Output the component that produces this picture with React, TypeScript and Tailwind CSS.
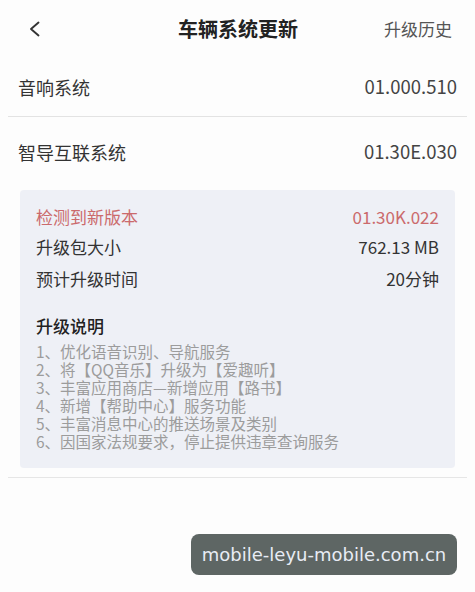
const notes = [
  '1、优化语音识别、导航服务',
  '2、将【QQ音乐】升级为【爱趣听】',
  '3、丰富应用商店—新增应用【路书】',
  '4、新增【帮助中心】服务功能',
  '5、丰富消息中心的推送场景及类别',
  '6、因国家法规要求，停止提供违章查询服务',
];

const font = { fontFamily: '"Noto Sans CJK SC", "Noto Sans", sans-serif' };

export default function App() {
  return (
    <div className="w-[475px] h-[592px] bg-[#fdfdfd] text-[#333] overflow-hidden" style={font}>
      {/* header */}
      <div className="h-[58px] flex items-center pl-[28px] pr-[23px]">
        <div className="w-[120px]">
          <svg width="14" height="16" viewBox="0 0 14 16" fill="none" className="text-[#333]">
            <path d="M10.5 1.5 L3 8 L10.5 14.5" stroke="currentColor" strokeWidth="1.9" strokeLinecap="round" strokeLinejoin="round" />
          </svg>
        </div>
        <div className="flex-1 text-center text-[20px] font-bold text-[#222] pr-[4px]">车辆系统更新</div>
        <div className="w-[120px] text-right text-[17px] text-[#555]">升级历史</div>
      </div>

      {/* current versions */}
      <div className="flex items-center justify-between px-[18px] h-[58px] text-[18px]">
        <span className="text-[#333]">音响系统</span>
        <span className="text-[#444] text-[18.5px]">01.000.510</span>
      </div>
      <div className="mx-[8px] h-px bg-[#e3e3e3]" />
      <div className="flex items-center justify-between px-[18px] h-[70px] text-[18px]">
        <span className="text-[#333]">智导互联系统</span>
        <span className="text-[#444] text-[18.5px]">01.30E.030</span>
      </div>

      {/* update card */}
      <div className="mx-[20px] mt-[3px] rounded-[4px] bg-[#eef0f6] px-[16px] pt-[14px] pb-[18px]">
        <div className="flex justify-between items-center h-[26px] text-[17px] text-[#cb6a6c]">
          <span>检测到新版本</span>
          <span>01.30K.022</span>
        </div>
        <div className="flex justify-between items-center h-[34px] text-[17px] text-[#333]">
          <span>升级包大小</span>
          <span>762.13 MB</span>
        </div>
        <div className="flex justify-between items-center h-[30px] text-[17px] text-[#333]">
          <span>预计升级时间</span>
          <span>20分钟</span>
        </div>
        <div className="mt-[21px] text-[17px] font-medium text-[#222] leading-[22px]">升级说明</div>
        <div className="mt-[5px] text-[15.5px] leading-[18px] text-[#9c9c9c]">
          {notes.map((n) => (
            <div key={n}>{n}</div>
          ))}
        </div>
      </div>
      <div className="mx-[8px] mt-[9px] h-px bg-[#e6e6e6]" />

      {/* watermark */}
      <div className="flex justify-end pr-[18px] mt-[56px]">
        <div
          className="h-[41px] w-[266px] rounded-[8px] bg-[#5e6664] flex items-center justify-center text-[18px] text-[#e8ecf4]"
          style={{ fontFamily: '"DejaVu Sans", sans-serif' }}
        >
          mobile-leyu-mobile.com.cn
        </div>
      </div>
    </div>
  );
}
